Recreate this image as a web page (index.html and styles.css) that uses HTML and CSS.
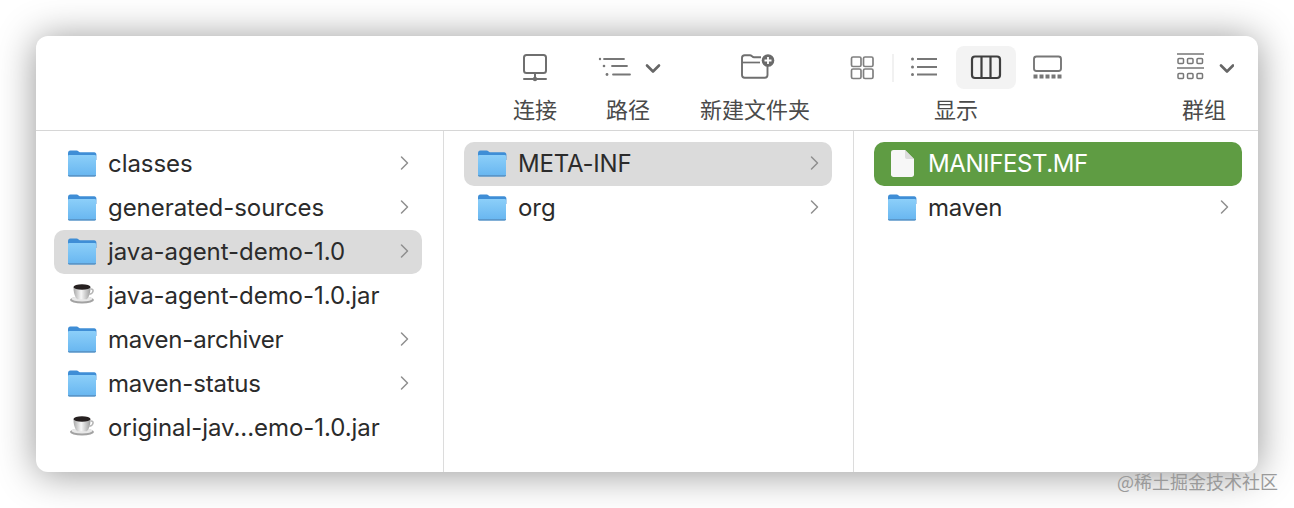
FILE: index.html
```html
<!DOCTYPE html>
<html lang="zh">
<head>
<meta charset="utf-8">
<title>Finder</title>
<link rel="stylesheet" href="styles.css">
</head>
<body>
<svg class="defs" width="0" height="0" aria-hidden="true">
  <defs>
    <linearGradient id="fg" x1="0" y1="0" x2="0" y2="1"><stop offset="0" stop-color="#8ccff9"/><stop offset="1" stop-color="#68b6f0"/></linearGradient>
    <linearGradient id="cup" x1="0" y1="0" x2="1" y2="0"><stop offset="0" stop-color="#a8a8a8"/><stop offset=".45" stop-color="#f7f7f7"/><stop offset="1" stop-color="#9c9c9c"/></linearGradient>
    <symbol id="folder" viewBox="0 0 30 30">
      <path d="M1 5.500C1 3.600 1.800 2.600 3.400 2.600h6.400c1.200 0 1.800 1.600 3 1.600h14.400c1.300 0 2.200.9 2.200 2.400V12H1z" fill="#3f8ed6"/>
      <path d="M1 8.200c0-.9.6-1.300 1.400-1.300h25.200c.8 0 1.400.4 1.400 1.300V26.500c0 1-.6 1.500-1.500 1.500H2.500c-.9 0-1.500-.5-1.500-1.500z" fill="url(#fg)"/>
      <path d="M1 27h28v.6c0 .7-.6 1.100-1.300 1.100H2.300c-.7 0-1.300-.4-1.300-1.100z" fill="#5a97ca"/>
    </symbol>
    <symbol id="coffee" viewBox="0 0 30 30">
      <ellipse cx="15" cy="20" rx="12" ry="3.500" fill="#a2a2a2"/>
      <ellipse cx="15" cy="18.800" rx="10.500" ry="2.600" fill="#e8e8e8"/>
      <path d="M6.500 7h17c0 5.500-1.200 10-3.800 12.200h-9.400C7.700 17 6.500 12.500 6.500 7z" fill="url(#cup)"/>
      <path d="M23.500 9c3.500-.5 3.800 4-1.200 5.400" fill="none" stroke="#b4b4b4" stroke-width="1.500"/>
      <ellipse cx="15" cy="7" rx="8.500" ry="2.800" fill="#262020"/>
    </symbol>
    <symbol id="chev" viewBox="0 0 10 16">
      <path d="M2.500 2l6 6-6 6" fill="none" stroke="#8f8f8f" stroke-width="1.500" stroke-linecap="round" stroke-linejoin="round"/>
    </symbol>
  </defs>
</svg>
<div class="window">
  <header class="toolbar">
    <div class="tool tool-connect">
      <svg class="tool-icon" width="50" height="44" viewBox="510 46 50 44"><g fill="none" stroke="#6f6f6f" stroke-width="2" stroke-linecap="round"><rect x="524" y="55" width="22" height="18" rx="2.500"/><path d="M535 73v6M524 79h22"/></g><circle cx="535" cy="79" r="2.200" fill="#6f6f6f"/></svg>
      <span class="tool-label">连接</span>
    </div>
    <div class="tool tool-path">
      <svg class="tool-icon" width="70" height="44" viewBox="593 46 70 44"><g fill="none" stroke="#777" stroke-width="1.800" stroke-linecap="round"><path d="M604 59h20M612 66h15M613 74.500h17"/><path d="M647 65.500l6 6 6-6" stroke="#666" stroke-width="2.600" stroke-linejoin="round"/></g><g fill="#777"><circle cx="600" cy="59" r="1.200"/><circle cx="604" cy="66" r="1.300"/><circle cx="607" cy="74.500" r="1.400"/></g></svg>
      <span class="tool-label">路径</span>
    </div>
    <div class="tool tool-new">
      <svg class="tool-icon" width="120" height="44" viewBox="695 46 120 44"><path d="M767.500 66v9c0 1.700-1 2.700-2.700 2.700h-20.100c-1.700 0-2.700-1-2.700-2.700V58c0-1.700 1-2.700 2.700-2.700h5.300c1.800 0 2.200 1.900 4 1.900h7" fill="none" stroke="#6f6f6f" stroke-width="1.900"/><path d="M742 62.500h18" stroke="#6f6f6f" stroke-width="1.700"/><circle cx="768" cy="60.500" r="6.300" fill="#6a6a6a"/><path d="M768 57v7M764.500 60.500h7" stroke="#fff" stroke-width="1.800"/></svg>
      <span class="tool-label">新建文件夹</span>
    </div>
    <div class="tool tool-view">
      <svg class="tool-icon" width="222" height="44" viewBox="845 46 222 44">
        <g fill="none" stroke="#808080" stroke-width="1.700"><rect x="851.500" y="57" width="9.500" height="9.500" rx="1.500"/><rect x="863.500" y="57" width="9.500" height="9.500" rx="1.500"/><rect x="851.500" y="69" width="9.500" height="9.500" rx="1.500"/><rect x="863.500" y="69" width="9.500" height="9.500" rx="1.500"/></g>
        <path d="M893 54v28" stroke="#ececec" stroke-width="1.500"/>
        <g stroke="#777" stroke-width="1.800"><path d="M917 59h20M917 67h20M917 74.500h20"/></g>
        <g fill="#777"><circle cx="912.500" cy="59" r="1.500"/><circle cx="912.500" cy="67" r="1.500"/><circle cx="912.500" cy="74.500" r="1.500"/></g>
        <rect x="956" y="46" width="60" height="43" rx="8" fill="#f3f3f3"/>
        <g fill="none" stroke="#3f3f3f" stroke-width="2.200"><rect x="972" y="56.500" width="28" height="21.500" rx="3"/><path d="M981.500 56.500v21.500M990.500 56.500v21.500"/></g>
        <rect x="1034" y="56.500" width="27" height="14.500" rx="2.500" fill="none" stroke="#777" stroke-width="1.900"/>
        <g fill="#777"><rect x="1033.500" y="74.500" width="4" height="4"/><rect x="1039.500" y="74.500" width="4" height="4"/><rect x="1045.500" y="74.500" width="4" height="4"/><rect x="1051.500" y="74.500" width="4" height="4"/><rect x="1057.500" y="74.500" width="4" height="4"/></g>
      </svg>
      <span class="tool-label">显示</span>
    </div>
    <div class="tool tool-group">
      <svg class="tool-icon" width="60" height="44" viewBox="1174 46 60 44"><g stroke="#777" stroke-width="1.500" fill="none"><path d="M1177 54h27M1177 68h27"/><rect x="1178" y="58.500" width="5.500" height="5" rx="1"/><rect x="1187.500" y="58.500" width="5.500" height="5" rx="1"/><rect x="1197" y="58.500" width="5.500" height="5" rx="1"/><rect x="1178" y="73.500" width="5.500" height="5" rx="1"/><rect x="1187.500" y="73.500" width="5.500" height="5" rx="1"/><rect x="1197" y="73.500" width="5.500" height="5" rx="1"/></g><path d="M1221 65.500l6 6 6-6" fill="none" stroke="#666" stroke-width="2.600" stroke-linecap="round" stroke-linejoin="round"/></svg>
      <span class="tool-label">群组</span>
    </div>
  </header>
  <main class="columns">
    <section class="col">
      <div class="row"><svg class="ic"><use href="#folder"/></svg><span class="name">classes</span><svg class="chev"><use href="#chev"/></svg></div>
      <div class="row"><svg class="ic"><use href="#folder"/></svg><span class="name">generated-sources</span><svg class="chev"><use href="#chev"/></svg></div>
      <div class="row row-sel"><svg class="ic"><use href="#folder"/></svg><span class="name">java-agent-demo-1.0</span><svg class="chev"><use href="#chev"/></svg></div>
      <div class="row"><svg class="ic"><use href="#coffee"/></svg><span class="name">java-agent-demo-1.0.jar</span></div>
      <div class="row"><svg class="ic"><use href="#folder"/></svg><span class="name name-tight">maven-archiver</span><svg class="chev"><use href="#chev"/></svg></div>
      <div class="row"><svg class="ic"><use href="#folder"/></svg><span class="name name-tight">maven-status</span><svg class="chev"><use href="#chev"/></svg></div>
      <div class="row"><svg class="ic"><use href="#coffee"/></svg><span class="name">original-jav...emo-1.0.jar</span></div>
    </section>
    <section class="col">
      <div class="row row-sel"><svg class="ic"><use href="#folder"/></svg><span class="name name-tight">META-INF</span><svg class="chev"><use href="#chev"/></svg></div>
      <div class="row"><svg class="ic"><use href="#folder"/></svg><span class="name">org</span><svg class="chev"><use href="#chev"/></svg></div>
    </section>
    <section class="col col-last">
      <div class="row row-active">
        <svg class="ic" viewBox="0 0 30 30"><path d="M4 4.500C4 2.800 5 2 6.500 2H18l9 9v15.500c0 1.500-1 2.500-2.500 2.500h-18C5 29 4 28 4 26.500z" fill="#f7f7f7"/><path d="M18 2l9 9h-7c-1.300 0-2-.8-2-2z" fill="#dcdcdc"/></svg>
        <span class="name name-caps">MANIFEST.MF</span>
      </div>
      <div class="row"><svg class="ic"><use href="#folder"/></svg><span class="name name-tight">maven</span><svg class="chev"><use href="#chev"/></svg></div>
    </section>
  </main>
</div>
<div class="watermark">@稀土掘金技术社区</div>
</body>
</html>
```
FILE: styles.css
```css
* { box-sizing: border-box; }
html, body { margin: 0; height: 508px; overflow: hidden; background: #fff; }
body { padding: 36px; position: relative; font-family: "Inter", "Noto Sans CJK SC", sans-serif; color: #2b2b2b; }
.defs { position: absolute; }
.window {
  width: 1222px; height: 436px; background: #fff; border-radius: 12px;
  box-shadow: 0 2px 38px rgba(0, 0, 0, .42);
  display: flex; flex-direction: column;
}
.toolbar {
  height: 95px; flex: none; padding: 10px 0 0 474px;
  display: flex; border-bottom: 1px solid #d6d6d6;
}
.tool { display: flex; flex-direction: column; align-items: center; flex: none; }
.tool-icon { display: block; flex: none; }
.tool-label { margin-top: 3px; height: 30px; line-height: 30px; font-size: 22px; color: #4a4a4a; font-family: "Noto Sans CJK SC", sans-serif; white-space: nowrap; }
.tool-path { margin-left: 33px; }
.tool-new { margin-left: 32px; }
.tool-view { margin-left: 30px; }
.tool-group { margin-left: 107px; }
.columns { flex: 1; display: flex; min-height: 0; }
.col { width: 408px; flex: none; padding: 11px 21px 0 18px; border-right: 1px solid #dcdcdc; }
.col + .col { width: 410px; padding-left: 20px; padding-right: 21px; }
.col-last.col-last { width: 404px; border-right: 0; padding-right: 16px; }
.row {
  height: 44px; border-radius: 10px; padding: 0 13px; display: flex; align-items: center;
  font-size: 24px; letter-spacing: -.05px;
}
.row-sel { background: #dbdbdb; }
.row-active { background: #5f9c43; color: #fff; }
.ic { width: 30px; height: 30px; flex: none; margin: 0 11px 2px 0; }
.name { flex: 1; white-space: nowrap; padding-bottom: 2px; }
.name-tight { letter-spacing: -.2px; }
.name-caps { letter-spacing: -.4px; }
.chev { width: 10px; height: 16px; flex: none; margin: 0 0 2px; }
.watermark {
  position: absolute; left: 1117px; top: 470px; font-size: 18px; line-height: 22px;
  color: #9a9a9a; font-family: "Noto Sans CJK SC", sans-serif; white-space: nowrap;
}
```
